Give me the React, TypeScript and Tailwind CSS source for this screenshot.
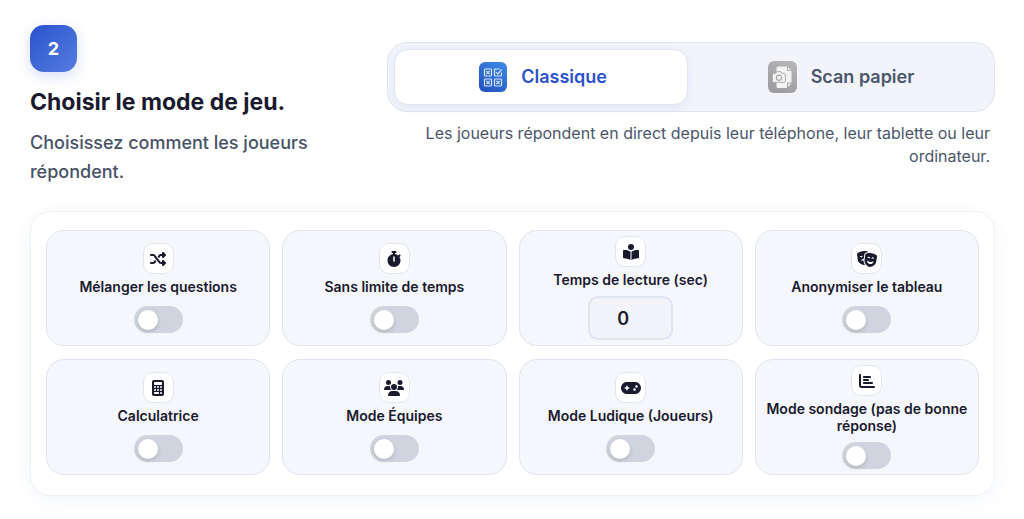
import { useState } from 'react'
import type { ReactNode } from 'react'
import type { IconType } from 'react-icons'
import {
    FaBookOpenReader,
    FaCalculator,
    FaChartBar,
    FaGamepad,
    FaMasksTheater,
    FaShuffle,
    FaStopwatch,
    FaUsers,
} from 'react-icons/fa6'

type Mode = 'classic' | 'paper'

type Option = {
    id: string
    label: string
    icon: IconType
    kind?: 'number'
}

const options: Option[] = [
    { id: 'shuffle', label: 'Mélanger les questions', icon: FaShuffle },
    { id: 'no-limit', label: 'Sans limite de temps', icon: FaStopwatch },
    { id: 'reading', label: 'Temps de lecture (sec)', icon: FaBookOpenReader, kind: 'number' },
    { id: 'anonymous', label: 'Anonymiser le tableau', icon: FaMasksTheater },
    { id: 'calculator', label: 'Calculatrice', icon: FaCalculator },
    { id: 'teams', label: 'Mode Équipes', icon: FaUsers },
    { id: 'playful', label: 'Mode Ludique (Joueurs)', icon: FaGamepad },
    { id: 'poll', label: 'Mode sondage (pas de bonne réponse)', icon: FaChartBar },
]

const descriptions: Record<Mode, string> = {
    classic: 'Les joueurs répondent en direct depuis leur téléphone, leur tablette ou leur ordinateur.',
    paper: 'Les joueurs répondent sur papier et vous scannez leurs feuilles.',
}

function ClassicIcon() {
    return (
        <svg className="h-[30px] w-8 shrink-0" viewBox="-4 0 32 30" fill="none" aria-hidden="true">
            <defs>
                <linearGradient id="classic-bg" x1="24" y1="2" x2="6" y2="28" gradientUnits="userSpaceOnUse">
                    <stop stopColor="#3b87e4" />
                    <stop offset="1" stopColor="#2556c0" />
                </linearGradient>
            </defs>
            <rect width="28" height="30" rx="6" fill="url(#classic-bg)" />
            <g stroke="#d5e5fb" strokeWidth="1.2">
                <rect x="5.5" y="7" width="7" height="7" rx="0.8" />
                <rect x="5.5" y="17" width="7" height="7" rx="0.8" />
                <rect x="15.5" y="17" width="7" height="7" rx="0.8" />
                <path d="M20.5 7h-4.2a.8.8 0 0 0-.8.8v5.4c0 .5.3.8.8.8h5.4c.5 0 .8-.3.8-.8v-2.7" />
                <path d="m7.3 8.8 3.4 3.4m0-3.4-3.4 3.4M7.3 18.8l3.4 3.4m0-3.4-3.4 3.4M17.3 18.8l3.4 3.4m0-3.4-3.4 3.4" />
                <path d="m17.2 10.2 1.7 1.8 3.8-4.6" />
            </g>
        </svg>
    )
}

function PaperIcon() {
    return (
        <svg className="h-8 w-[29px] shrink-0" viewBox="0 0 29 32" fill="none" aria-hidden="true">
            <defs>
                <linearGradient id="paper-bg" x1="22" y1="2" x2="8" y2="30" gradientUnits="userSpaceOnUse">
                    <stop stopColor="#b4b4b6" />
                    <stop offset="1" stopColor="#9d9d9f" />
                </linearGradient>
            </defs>
            <rect width="29" height="32" rx="6" fill="url(#paper-bg)" />
            <path d="M10 5.5h9v4.5h4.5v11.5H19V27h-9a1.5 1.5 0 0 1-1.5-1.5V7A1.5 1.5 0 0 1 10 5.5Z" fill="#f3f3f4" />
            <path d="M20 6.3v2.8h3zM20 26v-3.5h3.3z" fill="#f3f3f4" />
            <path
                d="M6 12.3h1.7l.9-1.6h4.4l.9 1.6h2c.9 0 1.5.6 1.5 1.5v6.1c0 .9-.6 1.5-1.5 1.5H6c-.9 0-1.5-.6-1.5-1.5v-6.1c0-.9.6-1.5 1.5-1.5Z"
                fill="#f3f3f4"
                stroke="#adadaf"
                strokeWidth="1"
            />
            <circle cx="11" cy="16.7" r="2.6" stroke="#adadaf" strokeWidth="1.2" />
        </svg>
    )
}

function ModeTab({
    active,
    onClick,
    icon,
    children,
}: {
    active: boolean
    onClick: () => void
    icon: ReactNode
    children: ReactNode
}) {
    return (
        <button
            type="button"
            aria-pressed={active}
            onClick={onClick}
            className={`flex h-14 flex-1 items-center justify-center gap-3.5 rounded-[14px] border text-lg font-semibold ${
                active
                    ? 'border-[#dfe4f2] bg-white text-[#2a53cd] shadow-[0_3px_10px_rgba(42,83,205,0.08)]'
                    : 'border-transparent text-[#4b566b]'
            }`}
        >
            {icon}
            {children}
        </button>
    )
}

function OptionCard({ option }: { option: Option }) {
    const Icon = option.icon

    return (
        <div className="flex flex-col items-center justify-center rounded-[18px] border border-[#dfe4f2] bg-[#f6f7fc] px-2 py-[5px]">
            <span className="flex size-[31px] items-center justify-center rounded-[10px] border border-[#e1e6f2] bg-white text-[#1a1a2e]">
                <Icon aria-hidden="true" className="h-4 w-5" />
            </span>
            <label
                htmlFor={option.id}
                className={`mt-1 text-center text-sm leading-[17px] font-semibold text-[#1a1a2e] ${
                    option.kind === 'number' ? '' : 'min-h-5'
                }`}
            >
                {option.label}
            </label>
            {option.kind === 'number' ? (
                <input
                    id={option.id}
                    type="number"
                    min={0}
                    defaultValue={0}
                    className="mt-2 h-11 w-[85px] rounded-[10px] border-2 border-[#dfe4f2] bg-[#f2f4fa] px-2 text-center text-lg font-semibold text-[#1a1a2e]"
                />
            ) : (
                <input
                    id={option.id}
                    type="checkbox"
                    role="switch"
                    className="mt-2 flex h-[27px] w-[49px] cursor-pointer appearance-none items-center rounded-full bg-[#d0d4df] px-1 transition-colors before:size-5 before:rounded-full before:bg-white before:shadow-[0_2px_4px_rgba(0,0,0,0.15)] before:transition-transform checked:bg-[#2a53cd] checked:before:translate-x-5"
                />
            )}
        </div>
    )
}

export default function App() {
    const [mode, setMode] = useState<Mode>('classic')

    return (
        <main className="bg-white pt-[25px] pr-[29px] pb-6 pl-[30px] font-['Inter',sans-serif]">
            <header className="flex items-start justify-between gap-8">
                <div className="min-w-0 flex-1">
                    <div className="flex size-[47px] items-center justify-center rounded-[14px] bg-linear-to-br from-[#2a53cd] to-[#567ce0] text-lg font-bold text-white shadow-[0_4px_14px_rgba(42,83,205,0.2)]">
                        2
                    </div>
                    <h2 className="mt-3.5 text-[23px] leading-8 font-bold text-[#1a1a2e]">Choisir le mode de jeu.</h2>
                    <p className="mt-2.5 text-lg leading-[29px] font-medium text-[#475266]">
                        Choisissez comment les joueurs répondent.
                    </p>
                </div>

                <div className="mt-[17px] w-[63%]">
                    <div className="flex gap-1.5 rounded-[20px] border border-[#dfe4f2] bg-[#f2f4fa] p-1.5">
                        <ModeTab active={mode === 'classic'} onClick={() => setMode('classic')} icon={<ClassicIcon />}>
                            Classique
                        </ModeTab>
                        <ModeTab active={mode === 'paper'} onClick={() => setMode('paper')} icon={<PaperIcon />}>
                            Scan papier
                        </ModeTab>
                    </div>
                    <p className="mt-2.5 px-[5px] text-right text-base leading-[23px] text-[#4b566b]">
                        {descriptions[mode]}
                    </p>
                </div>
            </header>

            <section className="mt-[25px] grid auto-rows-fr grid-cols-4 gap-x-3 gap-y-[13px] rounded-[20px] border border-[#f0f1f4] bg-white px-[15px] pt-[18px] pb-5 shadow-[0_4px_18px_rgba(42,83,205,0.06)]">
                {options.map((option) => (
                    <OptionCard key={option.id} option={option} />
                ))}
            </section>
        </main>
    )
}
